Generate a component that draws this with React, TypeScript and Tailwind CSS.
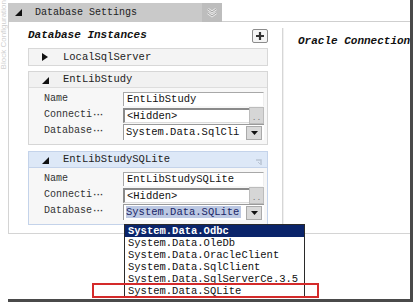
import React from "react";

const Tri = ({ dir }: { dir: "se" | "right" }) => (
  <svg width="7" height="8" viewBox="0 0 7 8" className="shrink-0">
    {dir === "se" ? (
      <polygon points="7,1 7,8 0,8" fill="#111" />
    ) : (
      <polygon points="0,0 6,4 0,8" fill="#111" />
    )}
  </svg>
);

const Label = ({ text }: { text: string }) => (
  <div className="w-[94px] h-[16px] leading-[16px] text-[10px] text-[#333] pl-[15px] shrink-0 whitespace-nowrap">
    {text}
    {text !== "Name" && <span className="text-[9px] tracking-[-2px] font-bold">···</span>}
  </div>
);

const TextCell = ({ value }: { value: string }) => (
  <div className="flex-1 h-[14px] mt-[1px] bg-white border-t border-l border-[#a8a8a8] border-r border-r-[#eeeeee] leading-[13px] text-[10.5px] text-[#111] pl-[3px] whitespace-nowrap overflow-hidden">
    {value}
  </div>
);

const DotsCell = ({ value }: { value: string }) => (
  <div className="flex-1 flex h-[16px]">
    <div className="flex-1 h-[15px] mt-[1px] bg-white border-t-2 border-l-2 border-[#8a8a8a] border-b border-b-[#dcdcdc] leading-[12px] text-[10.5px] text-[#111] pl-[2px] whitespace-nowrap overflow-hidden">
      {value}
    </div>
    <div className="w-[15px] h-[17px] bg-[#d6d6d6] border border-[#bcbcbc] text-[8px] text-[#777] leading-[20px] text-center">..</div>
  </div>
);

const SelectCell = ({ value, hl }: { value: string; hl?: boolean }) => (
  <div className="flex-1 flex items-center h-[16px] mt-[1px] bg-white border-t border-l border-[#9a9a9a] overflow-hidden">
    <div className="flex-1 leading-[13px] text-[10.5px] pl-[2px] whitespace-nowrap overflow-hidden">
      {hl ? (
        <span className="bg-[#bcc8e2] text-[#1a2668] pr-[2px]">{value}</span>
      ) : (
        <span className="text-[#111]">{value}</span>
      )}
    </div>
    <div className="w-[16px] h-[14px] bg-[#d9d9d9] border border-[#aaaaaa] flex items-center justify-center mr-[2px]">
      <svg width="7" height="4" viewBox="0 0 7 4">
        <polygon points="0,0 7,0 3.5,4" fill="#111" />
      </svg>
    </div>
  </div>
);

const Block = ({
  title,
  rows,
  selected,
}: {
  title: string;
  rows: React.ReactNode;
  selected?: boolean;
}) => (
  <div className={`w-[240px] border ${selected ? "border-[#c4d3ea]" : "border-[#d6d6d6]"} bg-[#f7f7f7] flex flex-col`}>
    <div
      className={`h-[16px] flex items-center pl-[13px] gap-[14px] border-b ${
        selected ? "bg-[#dde8f7] border-[#c4d3ea]" : "bg-[#f1f1f1] border-[#dddddd]"
      }`}
    >
      <Tri dir="se" />
      <span className="text-[10.5px] text-[#222] leading-none">{title}</span>
      {selected && (
        <svg width="8" height="8" viewBox="0 0 8 8" className="ml-auto mr-[4px] mt-[4px]">
          <path d="M1 2 H6 V7" stroke="#b9c4d4" strokeWidth="1.5" fill="none" />
          <path d="M3 4 L5 6" stroke="#b9c4d4" strokeWidth="1" />
        </svg>
      )}
    </div>
    <div className="flex flex-col pt-[3px] pb-[5px] pr-[3px]">{rows}</div>
  </div>
);

const Row = ({ label, children }: { label: string; children: React.ReactNode }) => (
  <div className="flex h-[16px]">
    <Label text={label} />
    {children}
  </div>
);

const items = [
  "System.Data.Odbc",
  "System.Data.OleDb",
  "System.Data.OracleClient",
  "System.Data.SqlClient",
  "System.Data.SqlServerCe.3.5",
  "System.Data.SQLite",
];

export default function App() {
  return (
    <div className="w-[415px] h-[305px] bg-white overflow-hidden relative flex font-['Liberation_Mono',monospace]">
      {/* left strip */}
      <div className="w-[8px] h-[240px] overflow-hidden flex items-start justify-center">
        <span className="[writing-mode:vertical-rl] rotate-180 text-[8px] text-[#d0d0d0] whitespace-nowrap font-['Liberation_Sans',sans-serif] leading-none">
          Block Configuration
        </span>
      </div>

      {/* main frame */}
      <div className="w-[405px] h-[302px] border-r-[3px] border-b-[3px] border-[#4a4a4a] flex flex-col">
        {/* header */}
        <div className="mt-[3px] h-[19px] flex">
          <div className="w-[214px] h-[19px] bg-[#c9c9c9] flex items-center">
            <div className="ml-[7px] mb-[2px]">
              <Tri dir="se" />
            </div>
            <span className="ml-[13px] text-[10px] text-[#222] leading-none">Database Settings</span>
            <div className="ml-auto w-[20px] h-[19px] bg-[#bdbdbd] flex items-center justify-center">
              <svg width="12" height="12" viewBox="0 0 12 12">
                <path d="M2 2 L6 5 L10 2 M2 6 L6 9 L10 6" stroke="#eeeeee" strokeWidth="2.4" fill="none" />
                <path d="M2 2 L6 5 L10 2 M2 6 L6 9 L10 6" stroke="#8a8a8a" strokeWidth="0.8" fill="none" />
              </svg>
            </div>
          </div>
          <div className="flex-1 h-[19px] border-b border-[#cfcfcf]" />
        </div>

        {/* body */}
        <div className="h-[212px] flex border-l border-b border-[#d4d4d4]">
          {/* left column */}
          <div className="w-[273px] pl-[19px] flex flex-col">
            <div className="mt-[6px] w-[240px] h-[15px] flex items-center">
              <span className="text-[11px] font-bold italic text-[#111] leading-none">Database Instances</span>
              <div className="ml-auto w-[16px] h-[14px] border border-[#8c8c8c] rounded-[2px] bg-[#f4f4f4] flex items-center justify-center">
                <svg width="10" height="10" viewBox="0 0 10 10">
                  <path d="M5 1 V9 M1 5 H9" stroke="#333" strokeWidth="2.2" />
                </svg>
              </div>
            </div>

            <div className="mt-[5px] w-[240px] h-[18px] bg-[#f4f4f4] border border-[#d8d8d8] flex items-center pl-[13px] gap-[14px]">
              <Tri dir="right" />
              <span className="text-[10.5px] text-[#222] leading-none">LocalSqlServer</span>
            </div>

            <div className="mt-[5px]">
              <Block
                title="EntLibStudy"
                rows={
                  <>
                    <Row label="Name">
                      <TextCell value="EntLibStudy" />
                    </Row>
                    <Row label="Connecti">
                      <DotsCell value="<Hidden>" />
                    </Row>
                    <Row label="Database">
                      <SelectCell value="System.Data.SqlCli" />
                    </Row>
                  </>
                }
              />
            </div>

            <div className="mt-[6px]">
              <Block
                selected
                title="EntLibStudySQLite"
                rows={
                  <>
                    <Row label="Name">
                      <TextCell value="EntLibStudySQLite" />
                    </Row>
                    <Row label="Connecti">
                      <DotsCell value="<Hidden>" />
                    </Row>
                    <Row label="Database">
                      <SelectCell value="System.Data.SQLite" hl />
                    </Row>
                  </>
                }
              />
            </div>
          </div>

          {/* separator */}
          <div className="mt-[6px] w-[2px] border-l border-r border-l-[#d6d6d6] border-r-[#f0f0f0]" />

          {/* right column */}
          <div className="flex-1 pl-[14px] pt-[6px] overflow-hidden">
            <span className="text-[11px] font-bold italic text-[#111] leading-none whitespace-nowrap">Oracle Connection</span>
          </div>
        </div>
      </div>

      {/* dropdown list overlay */}
      <div className="absolute left-[124px] top-[224px] w-[181px] border border-[#2a2a2a] bg-white flex flex-col">
        {items.map((t, i) => (
          <div
            key={t}
            className={`h-[12px] leading-[12px] text-[10.5px] pl-[3px] whitespace-nowrap ${
              i === 0 ? "bg-[#0a246a] text-white font-bold" : "text-[#111]"
            }`}
          >
            {t}
          </div>
        ))}
      </div>

      {/* red highlight box */}
      <div className="absolute left-[92px] top-[283px] w-[227px] h-[15px] border-2 border-[#d42a2a]" />
    </div>
  );
}
